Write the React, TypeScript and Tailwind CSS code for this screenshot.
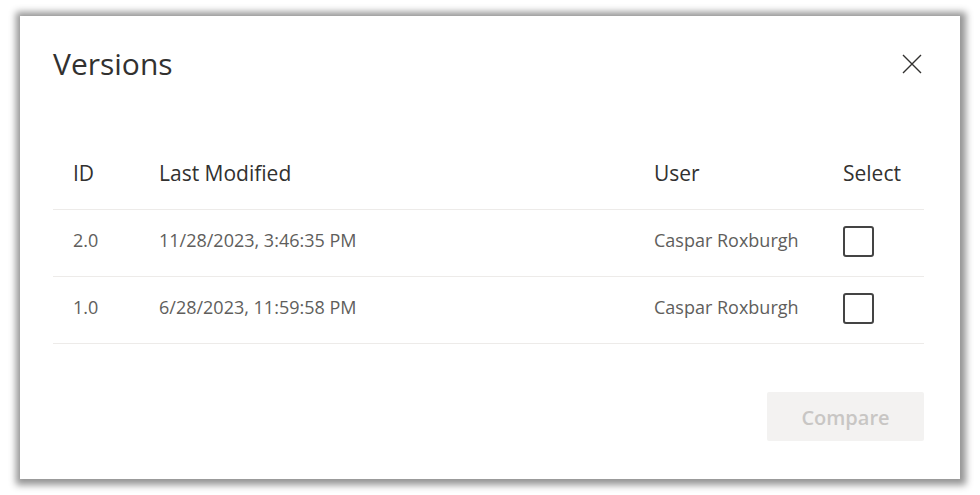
import React, { useState } from 'react';

const versions = [
  { id: '2.0', modified: '11/28/2023, 3:46:35 PM', user: 'Caspar Roxburgh' },
  { id: '1.0', modified: '6/28/2023, 11:59:58 PM', user: 'Caspar Roxburgh' },
];

const cols = 'grid grid-cols-[106px_495px_189px_1fr]';

export default function App() {
  const [checked, setChecked] = useState<Record<string, boolean>>({});

  return (
    <div className="w-[980px] h-[495px] bg-white pt-[16px] pl-[20px] font-['Open_Sans',sans-serif]">
      <div className="w-[940px] h-[463px] bg-white shadow-[1px_1px_7px_5px_rgba(0,0,0,0.42)] pl-[33px] pr-[36px] pt-[28px] flex flex-col">
        {/* Header */}
        <div className="flex items-center justify-between h-[40px]">
          <h1 className="text-[30px] leading-[40px] font-medium text-[#323130]">Versions</h1>
          <button className="w-[36px] h-[36px] -mr-[6px] flex items-center justify-center text-[#323130]">
            <svg width="20" height="20" viewBox="0 0 20 20" fill="none" stroke="currentColor" strokeWidth="1.4">
              <path d="M1 1L19 19M19 1L1 19" />
            </svg>
          </button>
        </div>

        {/* Table */}
        <div className="mt-[77px]">
          <div className={`${cols} border-b border-[#edebe9] pb-[24px] text-[21px] leading-[24px] text-[#323130]`}>
            <div className="pl-[20px]">ID</div>
            <div>Last Modified</div>
            <div>User</div>
            <div>Select</div>
          </div>
          {versions.map((v) => (
            <div
              key={v.id}
              className={`${cols} items-center h-[67px] border-b border-[#edebe9] text-[18px] text-[#605e5c]`}
            >
              <div className="pl-[20px] pb-[5px]">{v.id}</div>
              <div className="pb-[5px]">{v.modified}</div>
              <div className="pb-[5px]">{v.user}</div>
              <div className="-mt-[3px]">
                <button
                  onClick={() => setChecked((c) => ({ ...c, [v.id]: !c[v.id] }))}
                  className="w-[31px] h-[31px] rounded-[3px] border-[2px] border-[#444] bg-white flex items-center justify-center"
                >
                  {checked[v.id] && (
                    <svg width="16" height="16" viewBox="0 0 16 16" fill="none" stroke="#323130" strokeWidth="1.6">
                      <path d="M2 8.5L6 12.5L14 3.5" />
                    </svg>
                  )}
                </button>
              </div>
            </div>
          ))}
        </div>

        {/* Footer */}
        <div className="flex justify-end mt-[48px]">
          <button
            disabled
            className="w-[157px] h-[49px] pt-[3px] rounded-[2px] bg-[#f3f2f1] text-[20px] font-semibold text-[#c8c6c4]"
          >
            Compare
          </button>
        </div>
      </div>
    </div>
  );
}
